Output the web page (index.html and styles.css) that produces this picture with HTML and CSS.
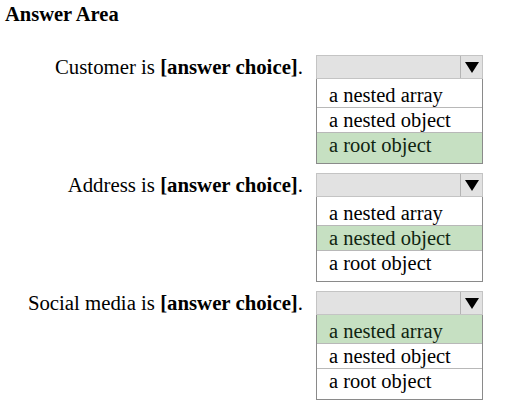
FILE: index.html
```html
<!DOCTYPE html>
<html>
<head>
<meta charset="utf-8">
<link rel="stylesheet" href="styles.css">
</head>
<body>
<div class="title">Answer Area</div>
<div class="area">
  <div class="item">
    <div class="label">Customer is <b>[answer choice]</b>.</div>
    <div class="select">
      <div class="header"><div class="arrow"><span class="tri"></span></div></div>
      <div class="list">
        <div class="option">a nested array</div>
        <div class="option">a nested object</div>
        <div class="option sel">a root object</div>
      </div>
    </div>
  </div>
  <div class="item">
    <div class="label">Address is <b>[answer choice]</b>.</div>
    <div class="select">
      <div class="header"><div class="arrow"><span class="tri"></span></div></div>
      <div class="list">
        <div class="option">a nested array</div>
        <div class="option sel">a nested object</div>
        <div class="option">a root object</div>
      </div>
    </div>
  </div>
  <div class="item">
    <div class="label">Social media is <b>[answer choice]</b>.</div>
    <div class="select">
      <div class="header"><div class="arrow"><span class="tri"></span></div></div>
      <div class="list">
        <div class="option sel">a nested array</div>
        <div class="option">a nested object</div>
        <div class="option">a root object</div>
      </div>
    </div>
  </div>
</div>
</body>
</html>
```
FILE: styles.css
```css
html, body {
  margin: 0;
  background: #fff;
}
body {
  font-family: "Liberation Serif", "Times New Roman", serif;
  color: #000;
  font-size: 20.5px;
}
.title {
  font-weight: bold;
  font-size: 20.5px;
  line-height: 24px;
  padding: 2px 0 0 5px;
}
.area {
  padding-top: 29px;
}
.item {
  display: grid;
  grid-template-columns: 303px 167px;
  column-gap: 13px;
  margin-bottom: 9px;
}
.label {
  text-align: right;
  height: 24px;
  line-height: 24px;
  font-size: 20.8px;
  white-space: nowrap;
}
.header {
  height: 22px;
  background: #e2e2e2;
  border: 1px solid #c4c4c4;
  display: flex;
  justify-content: flex-end;
}
.arrow {
  width: 21px;
  border-left: 1px solid #b4b4b4;
  display: flex;
  align-items: center;
  justify-content: center;
}
.tri {
  width: 0;
  height: 0;
  border-left: 7px solid transparent;
  border-right: 7px solid transparent;
  border-top: 11px solid #000;
}
.list {
  border: 1px solid #8a8a8a;
  border-top: 0;
}
.option {
  padding-left: 12px;
  line-height: 24px;
  white-space: nowrap;
}
.option + .option {
  border-top: 1px solid #b8b8b8;
}
.option:first-child {
  padding-top: 4px;
}
.option:last-child {
  padding-bottom: 6px;
}
.option.sel {
  background: #c6e0c2;
  color: #0f2410;
}
```
